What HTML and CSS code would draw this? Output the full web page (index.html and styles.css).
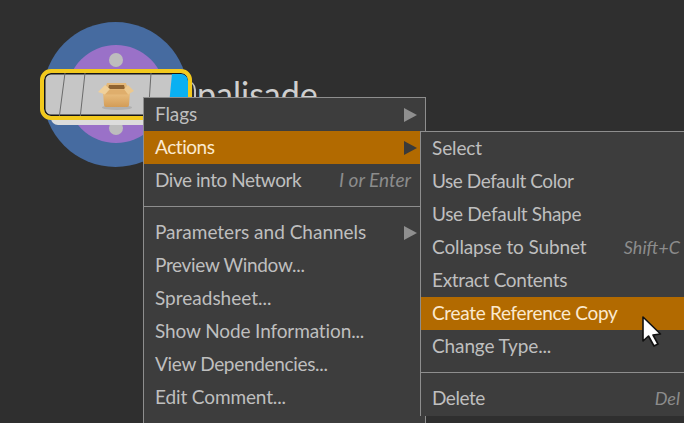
FILE: index.html
```html
<!DOCTYPE html>
<html lang="en">
<head>
<meta charset="utf-8">
<title>Node menu</title>
<link rel="stylesheet" href="styles.css">
</head>
<body>
<main class="canvas">
  <div class="node">
    <div class="ring-outer"></div>
    <div class="ring-inner"></div>
    <div class="dot dot-top"></div>
    <div class="dot dot-bottom"></div>
    <div class="plate"></div>
    <div class="halo"></div>
    <span class="label">palisade</span>
    <div class="body">
      <svg class="stripes" width="146" height="46" viewBox="0 0 146 46" aria-hidden="true">
        <path d="M21 0 L15 46 M41 0 L36 46 M107 0 L104 46" stroke="#6a6a6a" stroke-width="1" fill="none"/>
      </svg>
      <svg class="box" width="38" height="30" viewBox="0 0 38 30" aria-hidden="true">
        <defs>
          <linearGradient id="boxFront" x1="0" y1="0" x2="0" y2="1">
            <stop offset="0" stop-color="#ebc182"/>
            <stop offset="1" stop-color="#d39c57"/>
          </linearGradient>
        </defs>
        <ellipse cx="20" cy="26.5" rx="15" ry="2.5" fill="#b0b0b0"/>
        <path d="M6 11 L33 11 L32 24 Q32 26 30 26 L9 26 Q7 26 7 24 Z" fill="url(#boxFront)"/>
        <path d="M10 2 L29 2 L32 11 L7 11 Z" fill="#e4b878"/>
        <path d="M12 4 L27 4 L28 8 L11 8 Z" fill="#8f6330"/>
        <path d="M8 4 L1 11 L8 13.5 L13 8 Z" fill="#f0d09a"/>
        <path d="M31 4 L37 10 L31 13.5 L27 8 Z" fill="#ecc88e"/>
        <path d="M8 13.5 L13 8.5 L27 8.5 L31 13.5 Z" fill="#dfae6c"/>
      </svg>
      <div class="flag"></div>
    </div>
  </div>

  <nav class="menu menu-main">
    <div class="item"><span class="fit-a">Flags</span><i class="arrow"></i></div>
    <div class="item active"><span class="fit-c">Actions</span><i class="arrow"></i></div>
    <div class="item"><span class="fit-c">Dive into Network</span><em class="key-wide">I or Enter</em></div>
    <hr class="sep">
    <div class="item"><span>Parameters and Channels</span><i class="arrow"></i></div>
    <div class="item"><span class="fit-b">Preview Window...</span></div>
    <div class="item"><span>Spreadsheet...</span></div>
    <div class="item"><span class="fit-a">Show Node Information...</span></div>
    <div class="item"><span class="fit-b">View Dependencies...</span></div>
    <div class="item"><span class="fit-a">Edit Comment...</span></div>
  </nav>

  <nav class="menu menu-sub">
    <div class="item"><span class="fit-a">Select</span></div>
    <div class="item"><span class="fit-c">Use Default Color</span></div>
    <div class="item"><span class="fit-b">Use Default Shape</span></div>
    <div class="item"><span class="fit-a">Collapse to Subnet</span><em>Shift+C</em></div>
    <div class="item"><span class="fit-b">Extract Contents</span></div>
    <div class="item active"><span class="fit-b">Create Reference Copy</span></div>
    <div class="item"><span class="fit-a">Change Type...</span></div>
    <hr class="sep">
    <div class="item"><span class="fit-c">Delete</span><em>Del</em></div>
  </nav>

  <svg class="cursor" width="24" height="34" viewBox="0 0 24 34" aria-hidden="true">
    <path d="M2 2 L2 26 L7.5 21 L13 31 L17 29 L12 20 L19.5 19 Z" fill="#fff" stroke="#111" stroke-width="1.6" stroke-linejoin="round"/>
  </svg>
</main>
</body>
</html>
```
FILE: styles.css
```css
* { box-sizing: border-box; }
html, body { margin: 0; height: 100%; overflow: hidden; }
body {
  background: #2f2f2f;
  font-family: Lato, "Noto Sans", sans-serif;
  font-size: 19px;
  color: #bfbfbf;
}
.canvas { position: relative; width: 684px; height: 423px; overflow: hidden; }

.node, .ring-outer, .ring-inner, .dot, .plate, .halo, .body, .label, .menu, .cursor { position: absolute; }
.node { left: 0; top: 0; width: 400px; height: 180px; }
.ring-outer { left: 43px; top: 22px; width: 145px; height: 145px; border-radius: 50%; background: #466ba0; }
.ring-inner { left: 67px; top: 45px; width: 98px; height: 98px; border-radius: 50%; background: #9a71c8; }
.dot { left: 109px; width: 14px; height: 14px; border-radius: 50%; background: #bdbdbd; }
.dot-top { top: 53px; }
.dot-bottom { top: 121px; }
.plate { left: 51px; top: 100px; width: 120px; height: 25px; border-radius: 0 0 7px 7px; background: #dcdcdc; }
.halo { left: 176px; top: 80px; width: 20px; height: 30px; border-right: 2px solid #c4c4c4; border-top-right-radius: 10px; }
.body {
  left: 40px; top: 69px; width: 152px; height: 51px;
  border: 4px solid #f2c91d; border-radius: 11px;
  background: #c6c6c6;
  box-shadow: inset 0 0 0 1.5px #161616;
  overflow: hidden;
}
.stripes { position: absolute; left: 0; top: 0; }
.box { position: absolute; left: 53px; top: 8px; }
.flag { position: absolute; right: 0; top: 1px; bottom: 1px; width: 20px; background: #0ab0f2; border-radius: 0 7px 7px 0; clip-path: polygon(4px 0, 100% 0, 100% 100%, 0 100%); }
.label { left: 197px; top: 69px; font-size: 34px; line-height: 50px; color: #cfcfcf; }

.menu {
  background: #3d3d3d;
  border: 1px solid #8e8e8e;
  display: flex;
  flex-direction: column;
}
.menu-main { left: 143px; top: 97px; width: 283px; height: 340px; border-bottom: 0; }
.menu-sub { left: 420px; top: 131px; width: 270px; height: 285px; border-right: 0; border-bottom: 0; }
.item {
  display: flex; align-items: center; justify-content: space-between;
  height: 33px; padding: 0 14px 2px 11px; flex: none; white-space: nowrap;
}
.menu-sub .item { padding-right: 10px; }
.fit-a { letter-spacing: -0.12px; }
.fit-b { letter-spacing: -0.32px; }
.fit-c { letter-spacing: -0.45px; }
.item em { font-style: italic; color: #8c8c8c; font-size: 18px; }
.item em.key-wide { font-size: 19px; }
.item.active { background: #b26a00; color: #fbe9cf; }
.arrow { width: 0; height: 0; border-left: 13px solid #8f8f8f; border-top: 7px solid transparent; border-bottom: 7px solid transparent; margin-right: -6px; margin-top: 2px; }
.active .arrow { border-left-color: #3a3a3a; }
.sep { border: 0; border-top: 1px solid #8e8e8e; margin: 9px 0 9px; height: 0; flex: none; }
.cursor { left: 641px; top: 315px; }
```
